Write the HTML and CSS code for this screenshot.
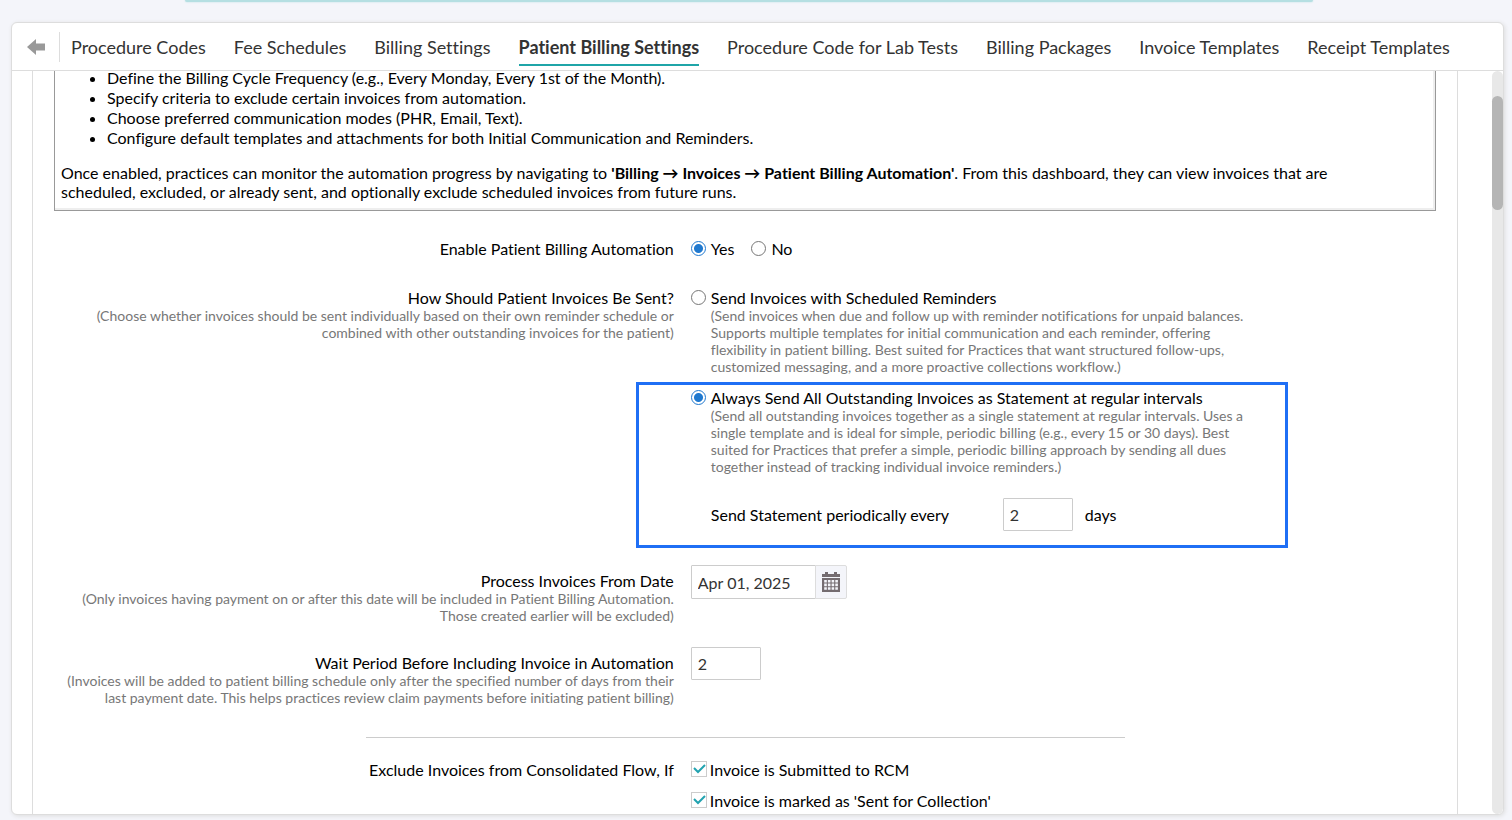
FILE: index.html
```html
<!doctype html>
<html lang="en">
  <head>
    <title>Patient Billing Settings</title>
    <meta charset="UTF-8">
    <meta name="viewport" content="width=device-width, initial-scale=1">
    <link rel="stylesheet" href="styles.css">
  </head>
  <body>
<div class="banner"></div>
<main class="card">
  <nav class="tabs">
    <button class="back" type="button" aria-label="Back">
      <svg width="18" height="16" viewBox="0 0 18 16"><path d="M0 8 9 0v4.500h9v7H9V16z" fill="#999"/></svg>
    </button>
    <a href="#">Procedure Codes</a>
    <a href="#">Fee Schedules</a>
    <a href="#">Billing Settings</a>
    <a href="#" class="active">Patient Billing Settings</a>
    <a href="#">Procedure Code for Lab Tests</a>
    <a href="#">Billing Packages</a>
    <a href="#">Invoice Templates</a>
    <a href="#">Receipt Templates</a>
  </nav>
  <div class="view">
    <form class="pane">
      <section class="info">
        <ul>
          <li>Define the Billing Cycle Frequency (e.g., Every Monday, Every 1st of the Month).</li>
          <li>Specify criteria to exclude certain invoices from automation.</li>
          <li>Choose preferred communication modes (PHR, Email, Text).</li>
          <li>Configure default templates and attachments for both Initial Communication and Reminders.</li>
        </ul>
        <p>Once enabled, practices can monitor the automation progress by navigating to <b>'Billing → Invoices → Patient Billing Automation'</b>. From this dashboard, they can view invoices that are scheduled, excluded, or already sent, and optionally exclude scheduled invoices from future runs.</p>
      </section>

      <div class="row enable">
        <div class="name">Enable Patient Billing Automation</div>
        <div class="field choices">
          <label class="choice"><input type="radio" name="enable" checked>Yes</label>
          <label class="choice"><input type="radio" name="enable">No</label>
        </div>
      </div>

      <div class="row how">
        <div class="name">How Should Patient Invoices Be Sent?
          <small>(Choose whether invoices should be sent individually based on their own reminder schedule or combined with other outstanding invoices for the patient)</small>
        </div>
        <div class="field">
          <div class="option">
            <input type="radio" name="how" id="reminders">
            <div>
              <label for="reminders">Send Invoices with Scheduled Reminders</label>
              <small>(Send invoices when due and follow up with reminder notifications for unpaid balances. Supports multiple templates for initial communication and each reminder, offering flexibility in patient billing. Best suited for Practices that want structured follow-ups, customized messaging, and a more proactive collections workflow.)</small>
            </div>
          </div>
          <div class="option marked">
            <input type="radio" name="how" id="statement" checked>
            <div>
              <label for="statement">Always Send All Outstanding Invoices as Statement at regular intervals</label>
              <small>(Send all outstanding invoices together as a single statement at regular intervals. Uses a single template and is ideal for simple, periodic billing (e.g., every 15 or 30 days). Best suited for Practices that prefer a simple, periodic billing approach by sending all dues together instead of tracking individual invoice reminders.)</small>
              <div class="every">
                <label for="every">Send Statement periodically every</label>
                <input class="text" type="text" id="every" value="2">
                <span>days</span>
              </div>
            </div>
          </div>
        </div>
      </div>

      <div class="row from">
        <div class="name"><label for="from">Process Invoices From Date</label>
          <small>(Only invoices having payment on or after this date will be included in Patient Billing Automation. Those created earlier will be excluded)</small>
        </div>
        <div class="field date">
          <input class="text" type="text" id="from" value="Apr 01, 2025">
          <button type="button" aria-label="Open calendar">
            <svg width="18" height="20" viewBox="0 0 18 20"><path d="M0 2h3V0h3v2h6V0h3v2h3v3H0zM0 6h18v14H0z" fill="#746c70"/><path d="M3.500 8v10M7.200 8v10M10.900 8v10M14.600 8v10" stroke="#f4f5fa" stroke-width="2.600" stroke-dasharray="2.600 1"/></svg>
          </button>
        </div>
      </div>

      <div class="row wait">
        <div class="name"><label for="wait">Wait Period Before Including Invoice in Automation</label>
          <small>(Invoices will be added to patient billing schedule only after the specified number of days from their last payment date. This helps practices review claim payments before initiating patient billing)</small>
        </div>
        <div class="field">
          <input class="text" type="text" id="wait" value="2">
        </div>
      </div>

      <hr>

      <div class="row exclude">
        <div class="name">Exclude Invoices from Consolidated Flow, If</div>
        <div class="field checks">
          <label class="check"><input type="checkbox" checked>Invoice is Submitted to RCM</label>
          <label class="check"><input type="checkbox" checked>Invoice is marked as 'Sent for Collection'</label>
        </div>
      </div>
    </form>
    <div class="scrollbar"><div class="thumb"></div></div>
  </div>
</main>
  </body>
</html>
```

FILE: styles.css
```css
* {
  box-sizing: border-box;
}
body {
  margin: 0;
  height: 100vh;
  display: flex;
  flex-direction: column;
  background: #f4f5fa;
  color: #000;
  font-family: Lato, sans-serif;
  font-size: 16px;
  font-variant-ligatures: none;
  line-height: 18px;
  overflow: hidden;
}
.banner {
  flex: none;
  height: 2px;
  margin: 0 199px 20px 185px;
  background: #b5dfe2;
  border-radius: 0 0 8px 8px;
  box-shadow: 0 0 2px #b5dfe2;
}
.card {
  flex: 1;
  min-height: 0;
  margin: 0 8px 5px 11px;
  display: flex;
  flex-direction: column;
  background: white;
  border: 1px solid #ddd;
  border-radius: 6px;
  box-shadow: 1px 1px 4px #ddd;
  overflow: hidden;
}
.tabs {
  flex: none;
  height: 48px;
  display: flex;
  align-items: center;
  gap: 28px;
  border-bottom: 1px solid #ddd;
  font-size: 18px;
}
.tabs a {
  height: 36px;
  padding-top: 5px;
  line-height: 24px;
  margin-top: 2px;
  color: #333;
  text-decoration: none;
  white-space: nowrap;
}
.tabs .active {
  border-bottom: 2px solid #1fa5a8;
  font-weight: bold;
}
.back {
  width: 48px;
  height: 30px;
  margin-right: -17px;
  padding: 0 0 0 15px;
  display: flex;
  align-items: center;
  background: none;
  border: 0;
  border-right: 1px solid #ddd;
}
.view {
  flex: 1;
  min-height: 0;
  display: flex;
  overflow: hidden;
}
.pane {
  flex: 1;
  min-width: 0;
  margin: 0 34px 0 20px;
  border: solid #ddd;
  border-width: 0 1px;
}
.info {
  margin: -3px 21px 0;
  padding: 0 6px 9px;
  border: solid #999;
  border-width: 0 1px 1px;
  box-shadow: inset -2px -2px #eee;
}
.info ul {
  margin: 0;
  padding-left: 46px;
  line-height: 20px;
}
.info p {
  margin: 15px 50px 0 0;
  line-height: 19px;
}
.row {
  display: grid;
  grid-template-columns: 45% 1fr;
  column-gap: 17px;
}
.name {
  padding-left: 16px;
  text-align: right;
}
small {
  display: block;
  font-size: 14px;
  line-height: 17px;
  color: #777;
}
.enable {
  margin-top: 29px;
}
.how {
  margin-top: 31px;
}
.from {
  margin-top: 17px;
}
.wait {
  margin-top: 23px;
}
.from .name, .wait .name {
  padding-top: 7px;
}
.choices {
  display: flex;
  gap: 17px;
}
.choice {
  display: flex;
  gap: 5px;
}
input[type=radio] {
  appearance: none;
  flex: none;
  width: 15px;
  height: 15px;
  margin: 1px 0 0;
  border: 1px solid #767676;
  border-radius: 50%;
}
input[type=radio]:checked {
  border-color: #2079cf;
  background: radial-gradient(#2079cf 4px, white 5px);
}
.option {
  display: flex;
  gap: 5px;
}
.option label {
  display: block;
}
.option small {
  width: 552px;
}
.option.marked {
  width: 652px;
  margin: 7px 0 0 -55px;
  padding: 4px 0 14px 52px;
  border: 3px solid #1f6ff5;
}
.every {
  display: flex;
  align-items: center;
  margin-top: 23px;
}
.every label {
  width: 280px;
}
.every .text {
  margin: 0 12px;
}
.text {
  width: 70px;
  height: 33px;
  padding: 0 6px;
  border: 1px solid #ccc;
  border-radius: 1px;
  color: #333;
  font: inherit;
}
.date {
  display: flex;
}
.date .text {
  width: 125px;
  height: 34px;
}
.date button {
  width: 32px;
  height: 34px;
  margin-left: -1px;
  padding: 0;
  display: flex;
  align-items: center;
  justify-content: center;
  background: #f4f5fa;
  border: 1px solid #ddd;
  border-radius: 0 2px 2px 0;
}
hr {
  width: 759px;
  margin: 31px auto 23px;
  border: 0;
  border-top: 1px solid #ccc;
}
.checks {
  display: flex;
  flex-direction: column;
  gap: 13px;
}
.check {
  display: flex;
  gap: 3px;
}
input[type=checkbox] {
  appearance: none;
  width: 16px;
  height: 16px;
  margin: 0;
  border: 1px solid #ccc;
  background: url("data:image/svg+xml,%3Csvg xmlns='http://www.w3.org/2000/svg' viewBox='0 0 14 14'%3E%3Cpath d='M2 6l4 4 7-7' fill='none' stroke='%2322a3b0' stroke-width='2'/%3E%3C/svg%3E");
}
.scrollbar {
  width: 11px;
  padding-top: 25px;
  background: #e8e8e8;
  border-radius: 6px;
}
.thumb {
  height: 114px;
  background: #b5b5b5;
  border-radius: 6px;
}
```
